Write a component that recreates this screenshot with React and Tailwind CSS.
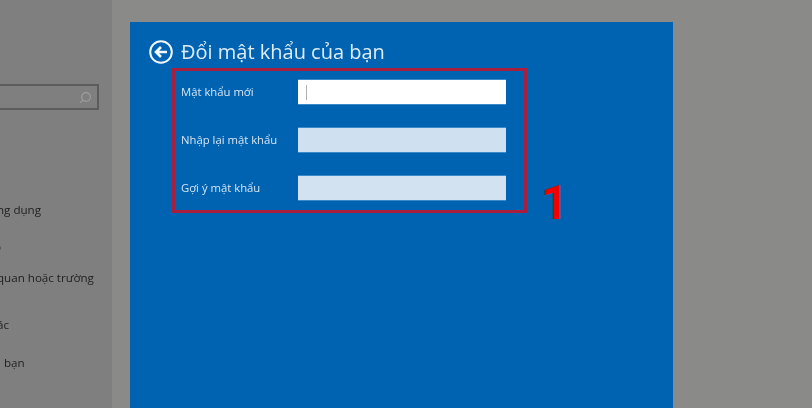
import { Search } from 'lucide-react';

const font = { fontFamily: '"Open Sans", "Noto Sans", sans-serif' };

const fields = [
  { label: 'Mật khẩu mới', bg: 'bg-white', cursor: true },
  { label: 'Nhập lại mật khẩu', bg: 'bg-[#cfe0f0]' },
  { label: 'Gợi ý mật khẩu', bg: 'bg-[#d2e2f0]' },
];

function Sidebar() {
  return (
    <aside className="w-[112px] shrink-0 bg-[#7f7f7f] overflow-hidden pt-[84px] text-[11.6px] leading-4 text-[#222222] blur-[0.5px]">
      <div className="w-[99px] h-[26px] border-[2px] border-l-0 border-[#5c5c5c] flex items-center justify-end pr-[5px]">
        <Search size={13} strokeWidth={2} className="text-[#a0a0a0] -scale-x-100" />
      </div>
      <ul className="flex flex-col items-start pt-[92px]">
        <li className="h-[16px] -ml-[3px] whitespace-nowrap">ng dụng</li>
        <li className="h-[16px] mt-[21px] -ml-[6px]">p</li>
        <li className="h-[16px] mt-[15px] -ml-[3px] whitespace-nowrap">quan hoặc trường</li>
        <li className="h-[16px] mt-[31px] -ml-[3px]">ác</li>
        <li className="h-[16px] mt-[22px] ml-[4px]">bạn</li>
      </ul>
    </aside>
  );
}

function ChangePassword() {
  return (
    <main className="w-[543px] h-full bg-[#0063b1] pl-[19px] pt-[16px] text-white">
      <div className="flex items-center gap-[8px] h-[27px]">
        <svg width="24" height="24" viewBox="0 0 24 24" fill="none" stroke="white" className="opacity-95">
          <circle cx="12" cy="12" r="10.8" strokeWidth="2" />
          <path d="M18 12H7.5M12 7l-5 5 5 5" strokeWidth="2.6" />
        </svg>
        <h1 className="text-[20px] leading-[27px] text-[#dfecf6] whitespace-nowrap blur-[0.3px]">Đổi mật khẩu của bạn</h1>
      </div>
      <div className="relative mt-[3px] ml-[23px] w-[355px] h-[145px] border-[3px] border-[#a81f3d] pl-[6px] pr-[18px] pt-[8px] flex flex-col gap-[22px]">
        {fields.map(f => (
          <div key={f.label} className="flex items-center h-[26px]">
            <span className="w-[117px] pt-px text-[11.3px] text-[#d5e5f3] whitespace-nowrap blur-[0.3px]">{f.label}</span>
            <div className={`flex-1 h-[26px] flex items-center pl-[8px] border-y border-[#3d8ac9] ${f.bg}`}>
              {f.cursor && <span className="w-px h-[15px] bg-[#b0b0b0]" />}
            </div>
          </div>
        ))}
        <span className="absolute left-[366px] top-[108px] text-[48px] leading-[48px] font-bold text-[#f00000]" style={{ fontFamily: 'Roboto, sans-serif' }}>1</span>
      </div>
    </main>
  );
}

export default function App() {
  return (
    <div className="w-[812px] h-[408px] overflow-hidden bg-[#8a8a88] flex" style={font}>
      <Sidebar />
      <div className="ml-[18px] pt-[22px]">
        <ChangePassword />
      </div>
    </div>
  );
}
